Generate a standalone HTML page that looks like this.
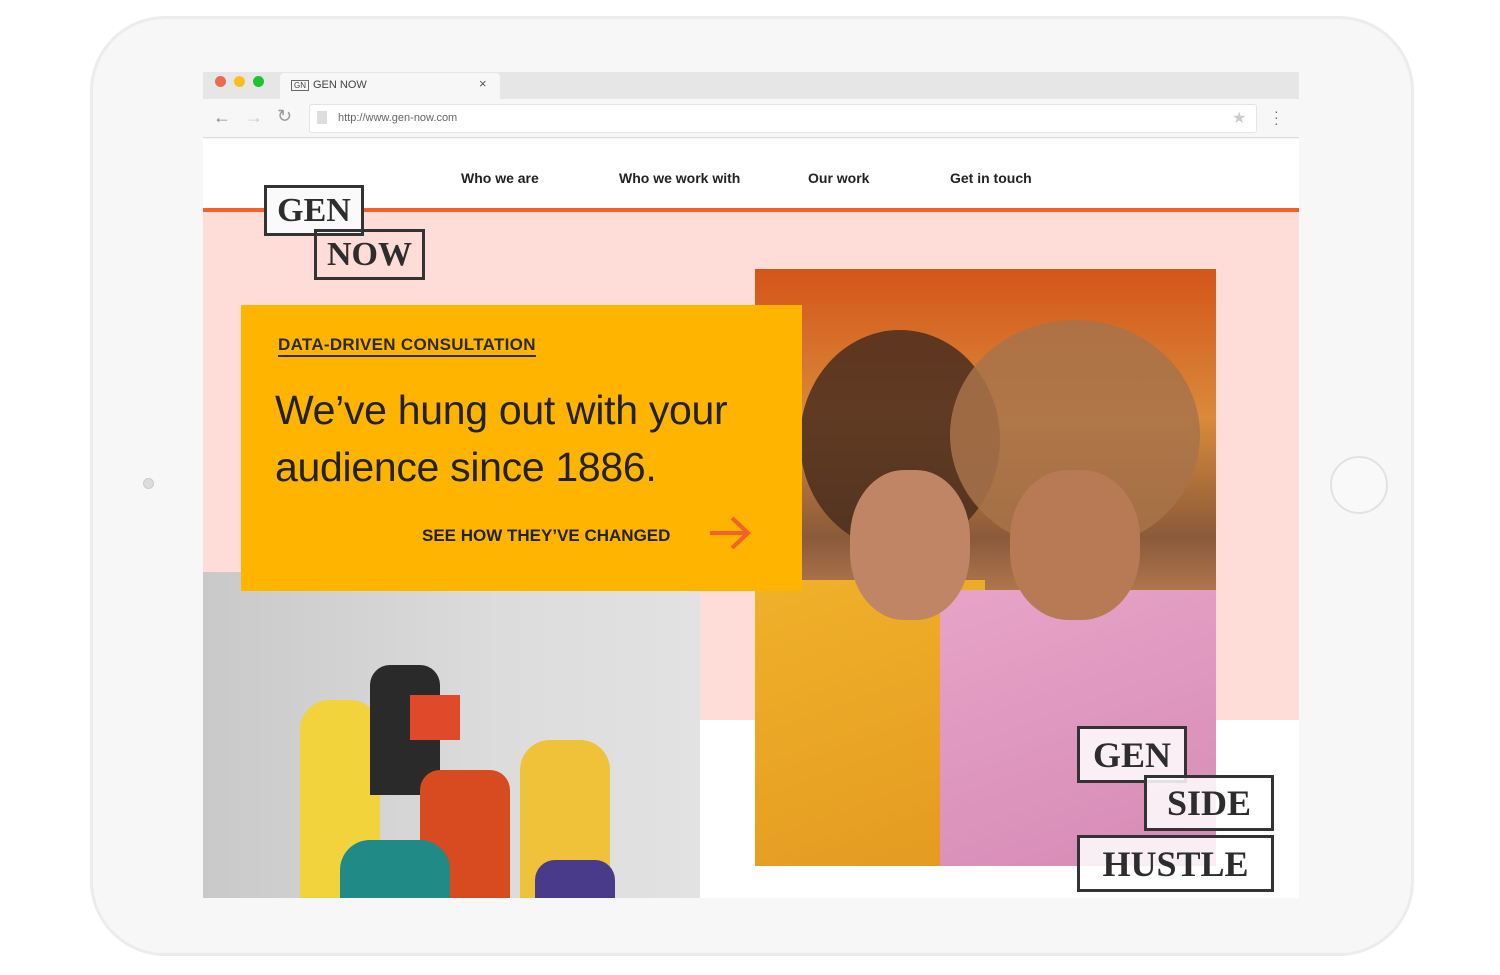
<!DOCTYPE html>
<html><head><meta charset="utf-8"><style>
*{margin:0;padding:0;box-sizing:border-box}
body{width:1500px;height:975px;background:#fff;position:relative;overflow:hidden;font-family:"Liberation Sans",sans-serif}
.abs{position:absolute}
.tablet{left:90px;top:16px;width:1324px;height:940px;border-radius:75px;background:#f7f7f7;border:3px solid #ececec}
.serif{font-family:"Liberation Serif",serif;font-weight:bold;color:#2d2d2d}
.box{position:absolute;border:3px solid #333;background:rgba(255,255,255,.85);display:flex;align-items:center;justify-content:center}
.nav{top:170px;font-size:14px;font-weight:bold;color:#222}
</style></head><body>
<div class="abs tablet"></div>
<div class="abs" style="left:1330px;top:456px;width:58px;height:58px;border-radius:50%;border:2px solid #e2e2e2;background:#f9f9f9"></div>
<div class="abs" style="left:143px;top:478px;width:11px;height:11px;border-radius:50%;background:#ddd;border:1px solid #ccc"></div>
<!-- browser chrome -->
<div class="abs" style="left:203px;top:72px;width:1096px;height:66px;background:#e6e6e6"></div>
<div class="abs" style="left:203px;top:99px;width:1096px;height:39px;background:#f7f7f7;border-bottom:1px solid #ddd"></div>
<div class="abs" style="left:280px;top:73px;width:220px;height:27px;background:#f7f7f7;border-radius:4px 4px 0 0"></div>
<div class="abs" style="left:215px;top:76px;width:11px;height:11px;border-radius:50%;background:#ed6a4e"></div>
<div class="abs" style="left:234px;top:76px;width:11px;height:11px;border-radius:50%;background:#fdbd1b"></div>
<div class="abs" style="left:253px;top:76px;width:11px;height:11px;border-radius:50%;background:#1ec42e"></div>
<div class="abs" style="left:291px;top:80px;width:18px;height:11px;border:1px solid #666;font-size:8px;line-height:9px;color:#444;text-align:center">GN</div>
<div class="abs" style="left:313px;top:79px;font-size:11px;color:#444">GEN NOW</div>
<div class="abs" style="left:479px;top:76px;font-size:13px;color:#555">×</div>
<div class="abs" style="left:213px;top:107px;font-size:18px;color:#888">←</div>
<div class="abs" style="left:245px;top:107px;font-size:18px;color:#ccc">→</div>
<div class="abs" style="left:277px;top:106px;font-size:18px;color:#999">↻</div>
<div class="abs" style="left:309px;top:104px;width:948px;height:29px;background:#fff;border:1px solid #e4e4e4;border-radius:3px"></div>
<div class="abs" style="left:317px;top:111px;width:10px;height:13px;background:#ddd"></div>
<div class="abs" style="left:338px;top:112px;font-size:11px;color:#666">http://www.gen-now.com</div>
<div class="abs" style="left:1232px;top:108px;font-size:16px;color:#ccc">★</div>
<div class="abs" style="left:1274px;top:108px;font-size:14px;color:#666;line-height:6px">·<br>·<br>·</div>
<!-- page -->
<div class="abs" style="left:203px;top:139px;width:1096px;height:70px;background:#fff"></div>
<div class="abs" style="left:203px;top:208px;width:1096px;height:4px;background:#f4622a"></div>
<div class="abs" style="left:203px;top:212px;width:1096px;height:508px;background:#fedcd7"></div>
<div class="abs" style="left:203px;top:720px;width:1096px;height:178px;background:#fff"></div>
<div class="abs nav" style="left:461px">Who we are</div>
<div class="abs nav" style="left:619px">Who we work with</div>
<div class="abs nav" style="left:808px">Our work</div>
<div class="abs nav" style="left:950px">Get in touch</div>
<div class="box serif" style="left:264px;top:185px;width:100px;height:51px;font-size:34px;background:#fafafa">GEN</div>
<div class="box serif" style="left:314px;top:229px;width:111px;height:51px;font-size:34px;background:transparent">NOW</div>
<!-- left photo -->
<div class="abs" style="left:203px;top:572px;width:497px;height:326px;background:linear-gradient(90deg,#c9c9c9,#dcdcdc 60%,#e2e2e2)"></div>
<div class="abs" style="left:300px;top:700px;width:80px;height:198px;background:#f2d33c;border-radius:30px 30px 0 0"></div>
<div class="abs" style="left:370px;top:665px;width:70px;height:130px;background:#2a2a2a;border-radius:20px 20px 0 0"></div>
<div class="abs" style="left:410px;top:695px;width:50px;height:45px;background:#e0492a"></div>
<div class="abs" style="left:420px;top:770px;width:90px;height:128px;background:#d84a20;border-radius:20px 20px 0 0"></div>
<div class="abs" style="left:520px;top:740px;width:90px;height:158px;background:#f0c23a;border-radius:30px 30px 0 0"></div>
<div class="abs" style="left:340px;top:840px;width:110px;height:58px;background:#1f8a86;border-radius:30px 30px 0 0"></div>
<div class="abs" style="left:535px;top:860px;width:80px;height:38px;background:#4a3a8a;border-radius:20px 20px 0 0"></div>
<!-- right photo -->
<div class="abs" style="left:755px;top:269px;width:461px;height:597px;background:linear-gradient(180deg,#d4551a 0%,#d98a3a 25%,#8a5a3a 45%,#c98a5a 60%,#e6a035 75%,#e8a03a 100%)"></div>
<div class="abs" style="left:755px;top:580px;width:230px;height:286px;background:linear-gradient(160deg,#f0b12a,#e39a20)"></div>
<div class="abs" style="left:940px;top:590px;width:276px;height:276px;background:linear-gradient(160deg,#e7a4c8,#d68ab5)"></div>
<div class="abs" style="left:800px;top:330px;width:200px;height:220px;border-radius:50%;background:#4a2d1e;opacity:.85"></div>
<div class="abs" style="left:950px;top:320px;width:250px;height:230px;border-radius:50%;background:#a8734a;opacity:.85"></div>
<div class="abs" style="left:850px;top:470px;width:120px;height:150px;border-radius:45%;background:#c08565"></div>
<div class="abs" style="left:1010px;top:470px;width:130px;height:150px;border-radius:45%;background:#b87a55"></div>
<!-- yellow card -->
<div class="abs" style="left:241px;top:305px;width:561px;height:286px;background:#ffb400"></div>
<div class="abs" style="left:278px;top:335px;font-size:17px;font-weight:bold;color:#2a2a2a;border-bottom:2px solid #2a2a2a;letter-spacing:.3px">DATA-DRIVEN CONSULTATION</div>
<div class="abs" style="left:275px;top:382px;font-size:41px;line-height:57px;color:#222;width:510px;letter-spacing:-.3px">We’ve hung out with your audience since 1886.</div>
<div class="abs" style="left:422px;top:526px;font-size:17px;font-weight:bold;color:#222">SEE HOW THEY’VE CHANGED</div>
<svg class="abs" style="left:708px;top:515px" width="44" height="36" viewBox="0 0 44 36"><path d="M2 18H40M24 3L40 18L24 33" fill="none" stroke="#f4622a" stroke-width="4"/></svg>
<!-- side hustle -->
<div class="box serif" style="left:1077px;top:726px;width:110px;height:57px;font-size:36px">GEN</div>
<div class="box serif" style="left:1144px;top:775px;width:130px;height:56px;font-size:36px">SIDE</div>
<div class="box serif" style="left:1077px;top:835px;width:197px;height:57px;font-size:36px">HUSTLE</div>
</body></html>
